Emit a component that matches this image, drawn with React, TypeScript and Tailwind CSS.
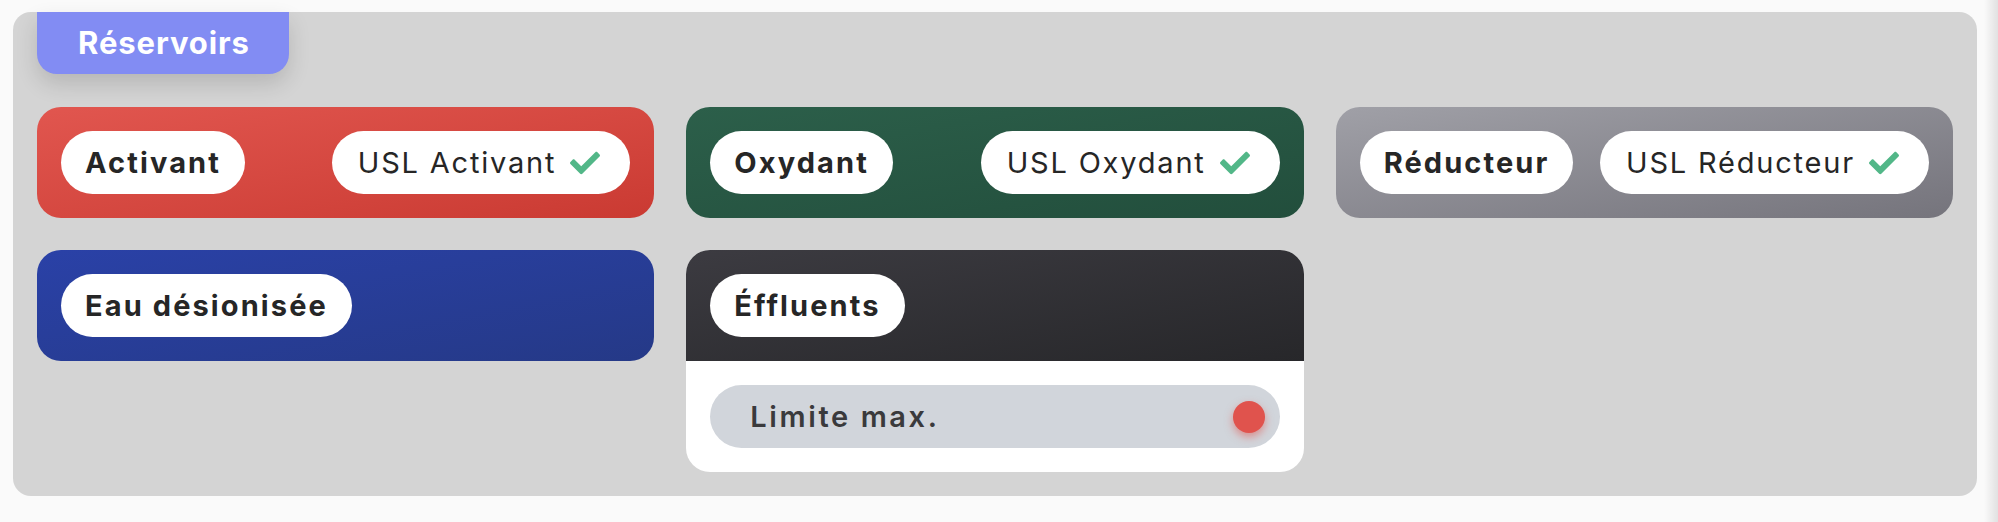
import { FaCheck } from 'react-icons/fa';

type Tank = {
  name: string;
  usl?: string;
  bg: string;
};

const tanks: Tank[] = [
  { name: 'Activant', usl: 'USL Activant', bg: 'bg-gradient-to-br from-[#e1564f] to-[#ca3a32]' },
  { name: 'Oxydant', usl: 'USL Oxydant', bg: 'bg-gradient-to-br from-[#2c5f4a] to-[#224e3c]' },
  { name: 'Réducteur', usl: 'USL Réducteur', bg: 'bg-gradient-to-br from-[#a0a0a7] to-[#75747c]' },
  { name: 'Eau désionisée', bg: 'bg-gradient-to-br from-[#2a41a7] to-[#253987]' },
];

function Label({ children }: { children: React.ReactNode }) {
  return (
    <div className="flex h-[63px] items-center rounded-full bg-white px-6 text-[29px] font-bold tracking-[2.1px] text-[#262626]">
      {children}
    </div>
  );
}

function TankCard({ tank }: { tank: Tank }) {
  return (
    <div className={`flex items-center justify-between gap-4 rounded-3xl p-6 ${tank.bg}`}>
      <Label>{tank.name}</Label>
      {tank.usl && (
        <div className="flex h-[63px] items-center gap-[14px] rounded-full bg-white pl-[26px] pr-[30px] text-[29px] tracking-[1.8px] text-[#262626]">
          <span>{tank.usl}</span>
          <FaCheck className="h-[30px] w-[30px] text-[#52b788]" />
        </div>
      )}
    </div>
  );
}

export default function App() {
  return (
    <div className="relative min-h-[522px] bg-[#fafafa] pb-[27px] pl-[13px] pr-[21px] pt-[12px] font-['Inter',sans-serif]">
      <div className="rounded-[18px] bg-[#d4d4d4] px-6 pb-6">
        <div className="inline-flex h-[62px] items-center rounded-b-[20px] bg-[#828cf3] pl-[41px] pr-[39px] text-[31px] font-bold tracking-[0.9px] text-white shadow-[0_10px_22px_rgba(0,0,0,0.14)]">
          Réservoirs
        </div>

        <div className="mt-[33px] grid grid-cols-3 items-start gap-8">
          {tanks.slice(0, 3).map((t) => (
            <TankCard key={t.name} tank={t} />
          ))}
          <TankCard tank={tanks[3]} />

          {/* Éffluents */}
          <div className="overflow-hidden rounded-3xl bg-white">
            <div className="flex items-center bg-gradient-to-br from-[#3c3b41] to-[#27272a] p-6">
              <Label>Éffluents</Label>
            </div>
            <div className="p-6">
              <div className="flex h-[63px] items-center justify-between rounded-full bg-[#d1d5db] pl-10 pr-[15px] text-[29px] font-semibold tracking-[2.6px] text-[#3a3a3c]">
                <span>Limite max.</span>
                <span className="h-8 w-8 rounded-full bg-[#e0534d] shadow-[0_4px_8px_rgba(224,83,77,0.55)]" />
              </div>
            </div>
          </div>
        </div>
      </div>
      <div className="pointer-events-none absolute inset-y-0 right-0 w-[14px] bg-gradient-to-r from-transparent to-black/10" />
    </div>
  );
}
